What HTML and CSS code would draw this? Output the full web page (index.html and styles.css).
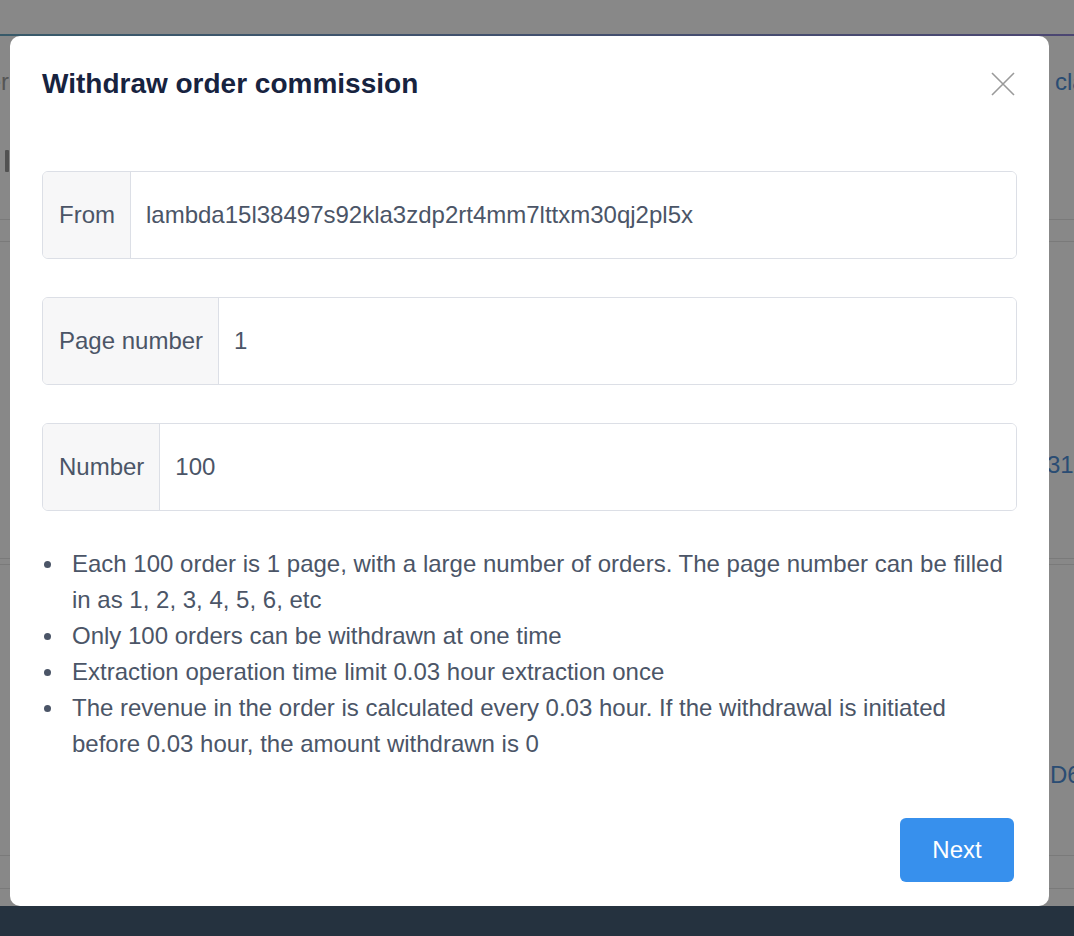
FILE: index.html
```html
<!DOCTYPE html>
<html lang="en">
<head>
<meta charset="utf-8">
<title>Withdraw order commission</title>
<link rel="stylesheet" href="styles.css">
</head>
<body>
<div class="page">
  <header class="topbar"></header>
  <div class="accent"></div>
  <section class="toolbar">
    <div class="tool-row">
      <span class="peek-left"><span class="muted">Commission order</span></span>
      <span class="peek-right w19 link">claim</span>
    </div>
    <div class="tool-row2">
      <svg class="tool-icon" width="6" height="22" viewBox="0 0 6 22"><rect x="0" y="0" width="4" height="22" rx="1" fill="#9a9a9a"/></svg>
    </div>
  </section>
  <div class="trow row-a"></div>
  <div class="trow row-b"><span class="peek-right w27 link">3190</span></div>
  <div class="trow row-c"></div>
  <div class="trow row-d"><span class="peek-right w24 link">D6A</span></div>
  <div class="trow row-e"></div>
  <div class="trow row-f"></div>
  <footer class="footer"></footer>
</div>

<div class="overlay">
  <div class="modal" role="dialog" aria-labelledby="modal-title">
    <div class="modal-header">
      <h2 id="modal-title" class="modal-title">Withdraw order commission</h2>
      <button class="close" aria-label="Close">
        <svg width="24" height="24" viewBox="0 0 24 24"><path d="M1 1L23 23M23 1L1 23" stroke="#9a9a9a" stroke-width="1.6" fill="none"/></svg>
      </button>
    </div>

    <div class="fields">
      <div class="field">
        <span class="field-label">From</span>
        <input class="field-input" type="text" value="lambda15l38497s92kla3zdp2rt4mm7lttxm30qj2pl5x">
      </div>
      <div class="field">
        <span class="field-label">Page number</span>
        <input class="field-input" type="text" value="1">
      </div>
      <div class="field">
        <span class="field-label">Number</span>
        <input class="field-input" type="text" value="100">
      </div>
    </div>

    <ul class="notes">
      <li><span>Each 100 order is 1 page, with a large number of orders. The page number can be filled in as 1, 2, 3, 4, 5, 6, etc</span></li>
      <li><span>Only 100 orders can be withdrawn at one time</span></li>
      <li><span>Extraction operation time limit 0.03 hour extraction once</span></li>
      <li><span>The revenue in the order is calculated every 0.03 hour. If the withdrawal is initiated before 0.03 hour, the amount withdrawn is 0</span></li>
    </ul>

    <div class="modal-footer">
      <button class="btn-primary">Next</button>
    </div>
  </div>
</div>
</body>
</html>
```

FILE: styles.css
```css
* {
  box-sizing: border-box;
}

html, body {
  margin: 0;
  padding: 0;
  height: 100%;
  overflow: hidden;
}

body {
  font-family: "Liberation Sans", Arial, Helvetica, sans-serif;
  background: #ffffff;
  color: #4b5567;
}

/* ---------- background page ---------- */
.page {
  display: flex;
  flex-direction: column;
  width: 100%;
  height: 100vh;
}

.topbar {
  height: 34px;
  flex: none;
  background: #ffffff;
}

.accent {
  height: 2px;
  flex: none;
  background: linear-gradient(90deg, #6aa9c6, #8f84d6);
}

.toolbar {
  height: 183px;
  flex: none;
  display: flex;
  flex-direction: column;
}

.tool-row {
  margin-top: 26px;
  height: 40px;
  display: flex;
  align-items: center;
  font-size: 24px;
}

.tool-row2 {
  margin-top: 48px;
  padding-left: 5px;
  display: flex;
}

.peek-left {
  width: 9px;
  display: flex;
  justify-content: flex-end;
  white-space: nowrap;
  overflow: hidden;
}

.muted {
  color: #a0a0a0;
}

.peek-right {
  margin-left: auto;
  white-space: nowrap;
  overflow: hidden;
  font-size: 24px;
}

.w19 { width: 19px; }
.w24 { width: 24px; }
.w27 { width: 27px; }

.link {
  color: #4f8fd8;
}

.trow {
  flex: none;
  border-top: 1px solid #e4e4e4;
  display: flex;
  align-items: center;
}

.row-a { height: 22px; }
.row-b { height: 317px; padding-top: 130px; }
.row-c { height: 6px; }
.row-d { height: 291px; padding-top: 130px; }
.row-e { height: 33px; }
.row-f { height: 18px; }

.footer {
  flex: 1;
  background: #465f76;
}

/* ---------- overlay & modal ---------- */
.overlay {
  position: fixed;
  inset: 0;
  background: rgba(0, 0, 0, 0.465);
  padding: 36px 0 0 10px;
}

.modal {
  width: 1039px;
  background: #ffffff;
  border-radius: 10px;
  padding: 30px 32px 24px 32px;
}

.modal-header {
  display: flex;
  align-items: center;
  justify-content: space-between;
  height: 36px;
  margin-bottom: 69px;
}

.modal-title {
  margin: 0;
  font-size: 28px;
  line-height: 36px;
  font-weight: 700;
  color: #17233f;
}

.close {
  border: 0;
  background: none;
  padding: 0;
  margin-right: 2px;
  width: 24px;
  height: 24px;
  display: flex;
  cursor: pointer;
}

.fields {
  display: flex;
  flex-direction: column;
  gap: 38px;
}

.field {
  display: flex;
  height: 88px;
  border: 1px solid #dcdfe6;
  border-radius: 6px;
  overflow: hidden;
}

.field-label {
  display: flex;
  align-items: center;
  padding: 0 15px 0 16px;
  background: #f7f7f8;
  border-right: 1px solid #dcdfe6;
  font-size: 24px;
  color: #4b5567;
  white-space: nowrap;
}

.field-input {
  flex: 1;
  border: 0;
  outline: none;
  padding: 0 15px;
  font-family: inherit;
  font-size: 24px;
  color: #4b5567;
  background: #ffffff;
}

.notes {
  list-style: none;
  margin: 35px 0 0 0;
  padding: 0 5px 0 0;
  font-size: 24px;
  line-height: 36px;
  color: #4b5567;
}

.notes li {
  display: flex;
  align-items: flex-start;
}

.notes li::before {
  content: "";
  flex: none;
  width: 7px;
  height: 7px;
  border-radius: 50%;
  background: #4b5567;
  margin: 15px 21px 0 2px;
}

.modal-footer {
  display: flex;
  justify-content: flex-end;
  margin-top: 56px;
}

.btn-primary {
  width: 114px;
  height: 64px;
  margin-right: 3px;
  border: 0;
  border-radius: 6px;
  background: #3790ed;
  color: #ffffff;
  font-family: inherit;
  font-size: 24px;
  cursor: pointer;
}
```
